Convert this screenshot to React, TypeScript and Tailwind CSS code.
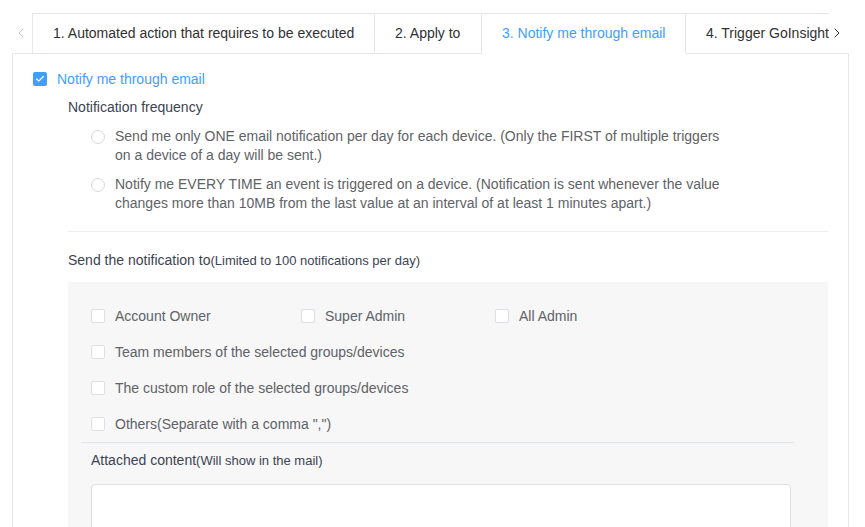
import { Check, ChevronLeft, ChevronRight } from 'lucide-react';

const tabs = [
  { label: '1. Automated action that requires to be executed', w: 'w-[342px]', active: false },
  { label: '2. Apply to', w: 'w-[107px]', active: false },
  { label: '3. Notify me through email', w: 'w-[204px]', active: true },
  { label: '4. Trigger GoInsight', w: 'w-[150px]', active: false },
];

function Box() {
  return <span className="w-[14px] h-[14px] shrink-0 rounded-[2px] border border-[#dcdfe6] bg-white" />;
}

function Radio() {
  return <span className="w-[14px] h-[14px] shrink-0 rounded-full border border-[#d4d7de] bg-white mt-[3px]" />;
}

export default function App() {
  return (
    <div className="w-[865px] h-[527px] overflow-hidden bg-white pt-[13px] font-['Liberation_Sans',Arial,sans-serif] text-[14px]">
      {/* tab header */}
      <div className="flex ml-[12px] w-[837px] h-[41px]">
        <div className="w-[20px] shrink-0 border-b border-[#e4e7ed] flex items-center justify-start pl-[1px]">
          <ChevronLeft className="w-[16px] h-[16px] text-[#c8cbd2]" strokeWidth={1.5} />
        </div>
        <div className="flex-1 flex overflow-hidden border-t border-l border-[#e4e7ed]">
          {tabs.map((t) => (
            <div
              key={t.label}
              className={`${t.w} shrink-0 h-[40px] flex items-center pl-[20px] whitespace-nowrap border-r ${
                t.active ? 'text-[#409eff] border-b border-b-white border-r-[#e4e7ed]' : 'text-[#303133] border-b border-[#e4e7ed]'
              }`}
            >
              {t.label}
            </div>
          ))}
        </div>
        <div className="w-[20px] shrink-0 border-b border-[#e4e7ed] flex items-center justify-start">
          <ChevronRight className="w-[16px] h-[16px] text-[#303133]" strokeWidth={1.5} />
        </div>
      </div>

      {/* panel */}
      <div className="ml-[12px] w-[837px] h-[480px] border-l border-r border-[#e4e7ed] pt-[15px]">
        <div className="flex items-center h-[20px] pl-[20px] gap-[10px]">
          <span className="w-[14px] h-[14px] rounded-[2px] bg-[#409eff] flex items-center justify-center">
            <Check className="w-[10px] h-[10px] text-white" strokeWidth={3} />
          </span>
          <span className="text-[#409eff]">Notify me through email</span>
        </div>

        <div className="ml-[55px] mr-[20px]">
          <div className="mt-[8px] h-[20px] leading-[20px] text-[#3c4353]">Notification frequency</div>

          <div className="mt-[10px] ml-[23px] flex gap-[10px] text-[#606266] leading-[19px]">
            <Radio />
            <span className="whitespace-nowrap">
              Send me only ONE email notification per day for each device. (Only the FIRST of multiple triggers
              <br />
              on a device of a day will be sent.)
            </span>
          </div>
          <div className="mt-[10px] ml-[23px] flex gap-[10px] text-[#606266] leading-[19px]">
            <Radio />
            <span className="whitespace-nowrap">
              Notify me EVERY TIME an event is triggered on a device. (Notification is sent whenever the value
              <br />
              changes more than 10MB from the last value at an interval of at least 1 minutes apart.)
            </span>
          </div>

          <div className="mt-[18px] h-px bg-[#ebeef5]" />

          <div className="mt-[18px] h-[20px] leading-[20px] text-[#3c4353]">
            Send the notification to<span className="text-[13px]">(Limited to 100 notifications per day)</span>
          </div>

          <div className="mt-[12px] bg-[#f7f7f7] pt-[16px] h-[260px]">
            <div className="flex items-center h-[36px] pl-[23px] text-[#606266]">
              <label className="w-[210px] flex items-center gap-[10px]">
                <Box />
                Account Owner
              </label>
              <label className="w-[194px] flex items-center gap-[10px]">
                <Box />
                Super Admin
              </label>
              <label className="flex items-center gap-[10px]">
                <Box />
                All Admin
              </label>
            </div>
            {['Team members of the selected groups/devices', 'The custom role of the selected groups/devices', 'Others(Separate with a comma ",")'].map((l) => (
              <label key={l} className="flex items-center h-[36px] pl-[23px] gap-[10px] text-[#606266]">
                <Box />
                {l}
              </label>
            ))}

            <div className="ml-[13px] w-[713px] h-px bg-[#dfe3ea]" />

            <div className="mt-[7px] ml-[23px] h-[20px] leading-[20px] text-[#3c4353]">
              Attached content<span className="text-[13px]">(Will show in the mail)</span>
            </div>

            <div className="mt-[14px] ml-[23px] w-[700px] h-[80px] bg-white border border-[#dcdfe6] rounded-[4px]" />
          </div>
        </div>
      </div>
    </div>
  );
}
